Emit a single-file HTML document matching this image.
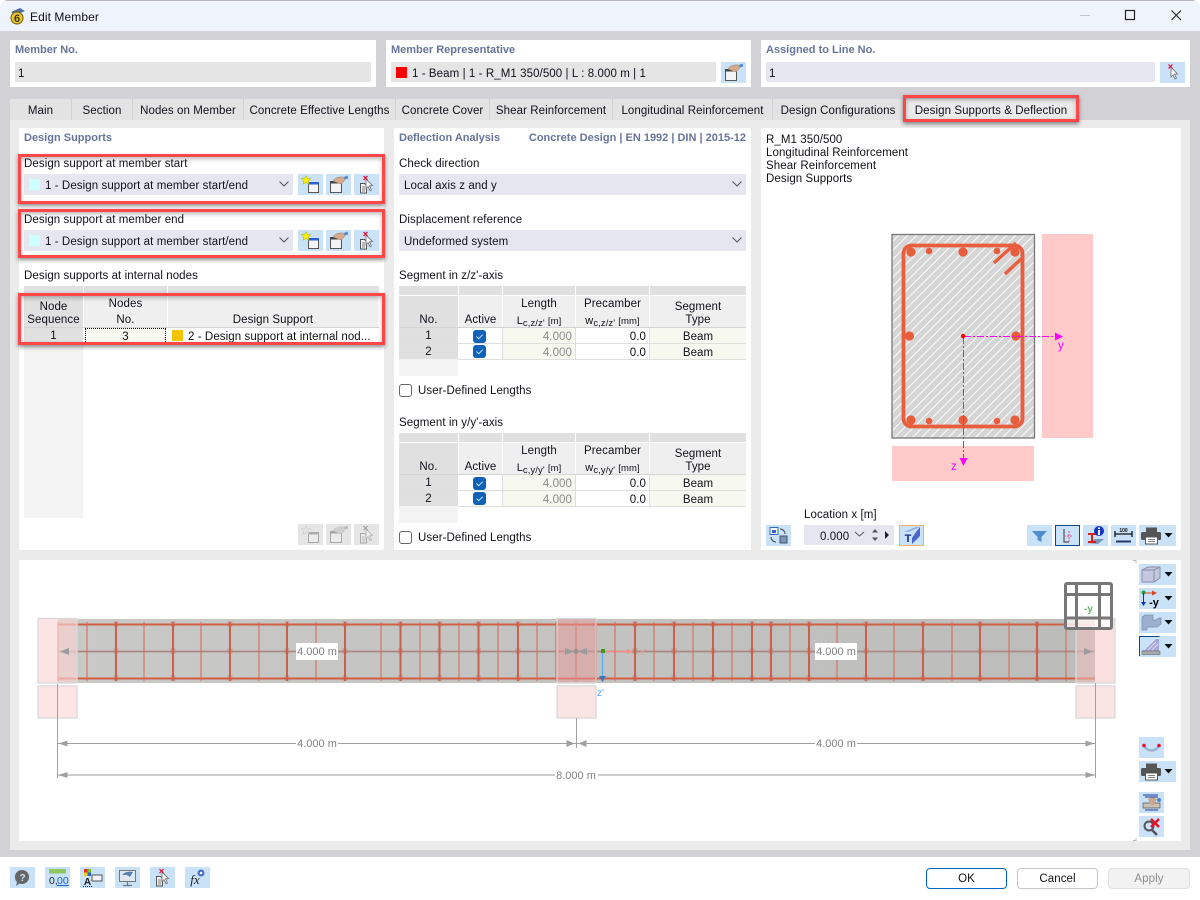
<!DOCTYPE html>
<html><head><meta charset="utf-8"><title>Edit Member</title>
<style>
html,body{margin:0;padding:0;background:#fff}
body{width:1200px;height:900px;overflow:hidden;position:relative;font-family:"Liberation Sans",sans-serif;font-size:11.5px;color:#10101a;letter-spacing:.08px}
svg{letter-spacing:0}
#w div,#w span.t{position:absolute}
.t{white-space:nowrap;line-height:14px;height:14px;transform:translateY(1px)}
.h{font-weight:700;color:#67749a;font-size:11px;letter-spacing:0}
.wh{background:#fff}
.dd{background:#e6e6f0}
.ro{background:#e5e5e5}
.b{background:#c9e2f8;width:25px;height:21px}
.b svg,.g svg{position:absolute;left:0;top:0}
.g{background:#e5e5e5;width:25px;height:21px}
.g svg{opacity:.42;filter:grayscale(1)}
.tab{top:99px;height:21px;background:#e3e3e3;line-height:24px;text-align:center;white-space:nowrap}
.red{border:3px solid #ff4649;box-sizing:border-box;box-shadow:0 2px 4px rgba(0,0,0,.45),inset 0 2px 4px rgba(0,0,0,.28)}
.c{text-align:center;white-space:nowrap;line-height:14px;transform:translateY(1px)}
.r{text-align:right;white-space:nowrap;line-height:15px;transform:translateY(1px)}
.cb{width:13px;height:13px;border:1px solid #666;border-radius:3px;box-sizing:border-box;background:#fff}
.ck{width:13px;height:13px;border-radius:3px;background:#0f62b8}
.ck svg{position:absolute;left:0;top:0}
.btn{top:868px;height:21px;width:81px;box-sizing:border-box;border:1px solid #c5c5c5;border-radius:4px;background:#fff;text-align:center;line-height:21px;font-size:11.5px}
sub{font-size:9.5px;vertical-align:-2px;line-height:0}
</style></head>
<body>
<svg width="0" height="0" style="position:absolute">
<defs>
<symbol id="new" viewBox="0 0 25 21"><rect x="10.5" y="8.5" width="10" height="10" fill="#f4f4f4" stroke="#555"/><rect x="10" y="8" width="11" height="2.5" fill="#2f5fd0"/><path d="M8 1.5l1.4 3 3.3.3-2.5 2.2.8 3.3L8 8.500l-3 1.800.8-3.300-2.500-2.200 3.300-.3z" fill="#f8f000" stroke="#b5a800" stroke-width=".5"/></symbol>
<symbol id="edit" viewBox="0 0 25 21"><rect x="4.500" y="7.500" width="11" height="11" fill="#f4f4f4" stroke="#555"/><rect x="4" y="7" width="12" height="2.500" fill="#444"/><path d="M7 7c1-3 6-4.500 10-4l2 1-1 3-3 3-3-1z" fill="#d4aa8c" stroke="#9a7e68" stroke-width=".5"/><path d="M18 3l3.500-1.500 .5 3-3 1z" fill="#4a86d8"/></symbol>
<symbol id="del" viewBox="0 0 25 21"><path d="M6.500 9.500h4l2 2v7.500h-6z" fill="#f4f4f4" stroke="#555"/><path d="M8 13h3M8 15h3M8 17h3" stroke="#555" stroke-width=".8"/><path d="M12 5l6.500 6.500-3 .4 2 4-1.500.7-2-4-2 2z" fill="#fff" stroke="#777" stroke-width=".9"/><path d="M9.500 2l4 4M13.500 2l-4 4" stroke="#e8002a" stroke-width="1.100"/></symbol>
<symbol id="cursor" viewBox="0 0 25 21"><path d="M11 5l6.500 7-3 .2 2 4-1.500.7-2-4-2 2z" fill="#fff" stroke="#777" stroke-width=".9"/><path d="M8.500 2.500l4 4M12.500 2.500l-4 4" stroke="#e8002a" stroke-width="1.100"/></symbol>
<symbol id="print" viewBox="0 0 25 21"><rect x="7" y="2.500" width="11" height="4.500" fill="#555"/><rect x="2" y="7" width="20" height="8" rx="1.500" fill="#555"/><rect x="6.500" y="12" width="12" height="7" fill="#fff" stroke="#555"/><path d="M9 14.500h7M9 16.500h7" stroke="#555" stroke-width=".8"/></symbol>
<symbol id="tri" viewBox="0 0 12 21"><path d="M1.500 8h8l-4 4.500z" fill="#111"/></symbol>
<pattern id="hatch" patternUnits="userSpaceOnUse" width="9" height="9"><rect width="9" height="9" fill="#d5d5d5"/><path d="M-1 10L10 -1M-1 1L1 -1M8 10L10 8" stroke="#fff" stroke-width=".9"/></pattern>
<linearGradient id="beamg" x1="0" x2="1" y1="0" y2="0"><stop offset="0" stop-color="#c9c9c7"/><stop offset="1" stop-color="#bcbcba"/></linearGradient>
<filter id="soft" x="-2%" y="-2%" width="104%" height="104%"><feGaussianBlur stdDeviation=".35"/></filter>
</defs>
</svg>

<div id="w" style="position:absolute;left:0;top:0;width:1200px;height:900px;border-radius:8px;overflow:hidden;background:#fff">
<!-- frame -->
<div style="left:0;top:0;width:1200px;height:31px;background:#eff3fb;border-top:1px solid #b5b5b8;box-sizing:border-box"></div>
<div style="left:0;top:31px;width:1200px;height:826px;background:#d1d1d6"></div>
<div style="left:10px;top:120px;width:1180px;height:730px;background:#ebebeb"></div>

<!-- title -->
<svg style="position:absolute;left:8px;top:6px" width="20" height="20" viewBox="0 0 20 20"><path d="M3 6l9-4 5 3-9 4z" fill="#4d6f9c"/><circle cx="9" cy="12" r="6" fill="#f0c61e" stroke="#6b5a10"/><text x="9" y="16" font-size="11" font-weight="700" text-anchor="middle" fill="#333" font-family="Liberation Sans">6</text></svg>
<span class="t" style="left:30px;top:9px;font-size:12px">Edit Member</span>
<svg style="position:absolute;left:1070px;top:0" width="130" height="31"><path d="M10 15.500h10" stroke="#c4c4c4"/><rect x="55.500" y="10.500" width="9" height="9" fill="none" stroke="#222" stroke-width="1.200"/><path d="M101.500 10.500l9.500 9.500M111 10.500l-9.500 9.500" stroke="#222" stroke-width="1.100"/></svg>

<!-- top groups -->
<div class="wh" style="left:10px;top:40px;width:366px;height:47px"></div>
<span class="t h" style="left:15px;top:42px">Member No.</span>
<div class="ro" style="left:15px;top:62px;width:356px;height:20px"></div>
<span class="t" style="left:18px;top:66px">1</span>

<div class="wh" style="left:386px;top:40px;width:365px;height:47px"></div>
<span class="t h" style="left:391px;top:42px">Member Representative</span>
<div class="ro" style="left:391px;top:62px;width:325px;height:20px"></div>
<div style="left:396px;top:67px;width:11px;height:11px;background:#f00"></div>
<span class="t" style="left:412px;top:66px">1 - Beam | 1 - R_M1 350/500 | L : 8.000 m | 1</span>
<div class="b" style="left:721px;top:62px"><svg width="25" height="21"><use href="#edit"/></svg></div>

<div class="wh" style="left:761px;top:40px;width:429px;height:47px"></div>
<span class="t h" style="left:766px;top:42px">Assigned to Line No.</span>
<div class="dd" style="left:766px;top:62px;width:389px;height:20px"></div>
<span class="t" style="left:769px;top:66px">1</span>
<div class="b" style="left:1160px;top:62px"><svg width="25" height="21"><use href="#cursor"/></svg></div>

<!-- tabs -->
<div class="tab" style="left:10px;width:61px">Main</div>
<div class="tab" style="left:72px;width:60px">Section</div>
<div class="tab" style="left:133px;width:110px">Nodes on Member</div>
<div class="tab" style="left:244px;width:151px">Concrete Effective Lengths</div>
<div class="tab" style="left:396px;width:93px">Concrete Cover</div>
<div class="tab" style="left:490px;width:122px">Shear Reinforcement</div>
<div class="tab" style="left:613px;width:159px">Longitudinal Reinforcement</div>
<div class="tab" style="left:773px;width:130px">Design Configurations</div>
<div class="tab" style="left:904px;width:174px;background:#ebebeb">Design Supports &amp; Deflection</div>

<!-- panels -->
<div class="wh" style="left:19px;top:128px;width:365px;height:422px"></div>
<div class="wh" style="left:394px;top:128px;width:357px;height:422px"></div>
<div class="wh" style="left:761px;top:128px;width:420px;height:422px"></div>
<div class="wh" style="left:19px;top:560px;width:1162px;height:281px"></div>

<!-- left panel -->
<span class="t h" style="left:24px;top:130px">Design Supports</span>
<span class="t" style="left:24px;top:156px">Design support at member start</span>
<div class="dd" style="left:24px;top:174px;width:269px;height:21px"></div>
<div style="left:29px;top:179px;width:11px;height:11px;background:#ccffff"></div>
<span class="t" style="left:45px;top:178px">1 - Design support at member start/end</span>
<svg style="position:absolute;left:278px;top:180px" width="12" height="8"><path d="M1.500 1.500l4.500 4.500 4.500-4.500" fill="none" stroke="#555"/></svg>
<div class="b" style="left:298px;top:174px"><svg width="25" height="21"><use href="#new"/></svg></div>
<div class="b" style="left:326px;top:174px"><svg width="25" height="21"><use href="#edit"/></svg></div>
<div class="b" style="left:354px;top:174px"><svg width="25" height="21"><use href="#del"/></svg></div>

<span class="t" style="left:24px;top:212px">Design support at member end</span>
<div class="dd" style="left:24px;top:230px;width:269px;height:21px"></div>
<div style="left:29px;top:235px;width:11px;height:11px;background:#ccffff"></div>
<span class="t" style="left:45px;top:234px">1 - Design support at member start/end</span>
<svg style="position:absolute;left:278px;top:236px" width="12" height="8"><path d="M1.500 1.500l4.500 4.500 4.500-4.500" fill="none" stroke="#555"/></svg>
<div class="b" style="left:298px;top:230px"><svg width="25" height="21"><use href="#new"/></svg></div>
<div class="b" style="left:326px;top:230px"><svg width="25" height="21"><use href="#edit"/></svg></div>
<div class="b" style="left:354px;top:230px"><svg width="25" height="21"><use href="#del"/></svg></div>

<span class="t" style="left:24px;top:268px">Design supports at internal nodes</span>
<!-- left table -->
<div style="left:24px;top:286px;width:59px;height:232px;background:#f3f3f3"></div>
<div style="left:24px;top:286px;width:355px;height:10px;background:#e0e0e0"></div>
<div style="left:24px;top:296px;width:59px;height:31px;background:#e0e0e0"></div>
<div style="left:84px;top:296px;width:83px;height:31px;background:#efefef"></div>
<div style="left:168px;top:296px;width:210px;height:31px;background:#efefef"></div>
<div style="left:83px;top:286px;width:1px;height:42px;background:#fff"></div>
<div style="left:167px;top:286px;width:1px;height:42px;background:#fff"></div>
<div style="left:24px;top:327px;width:355px;height:1px;background:#d4d4d4"></div>
<div class="c" style="left:24px;top:299px;width:59px">Node</div>
<div class="c" style="left:24px;top:312px;width:59px">Sequence</div>
<div class="c" style="left:84px;top:296px;width:83px">Nodes</div>
<div class="c" style="left:84px;top:312px;width:83px">No.</div>
<div class="c" style="left:168px;top:312px;width:210px">Design Support</div>
<div style="left:24px;top:328px;width:59px;height:16px;background:#e0e0e0"></div>
<div class="c" style="left:24px;top:328px;width:59px">1</div>
<div style="left:85px;top:328px;width:81px;height:16px;background:#f7f8f0;border:1px dotted #111;box-sizing:border-box"></div>
<div class="c" style="left:84px;top:329px;width:83px">3</div>
<div style="left:172px;top:330px;width:11px;height:11px;background:#f5c400"></div>
<span class="t" style="left:188px;top:329px">2 - Design support at internal nod...</span>
<div class="g" style="left:298px;top:524px"><svg width="25" height="21"><use href="#new"/></svg></div>
<div class="g" style="left:326px;top:524px"><svg width="25" height="21"><use href="#edit"/></svg></div>
<div class="g" style="left:354px;top:524px"><svg width="25" height="21"><use href="#del"/></svg></div>

<!-- middle panel -->
<span class="t h" style="left:399px;top:130px">Deflection Analysis</span>
<span class="t h" style="right:454px;top:130px">Concrete Design | EN 1992 | DIN | 2015-12</span>
<span class="t" style="left:399px;top:156px">Check direction</span>
<div class="dd" style="left:399px;top:174px;width:347px;height:21px"></div>
<span class="t" style="left:404px;top:178px">Local axis z and y</span>
<svg style="position:absolute;left:731px;top:180px" width="12" height="8"><path d="M1.500 1.500l4.500 4.500 4.500-4.500" fill="none" stroke="#555"/></svg>
<span class="t" style="left:399px;top:212px">Displacement reference</span>
<div class="dd" style="left:399px;top:230px;width:347px;height:21px"></div>
<span class="t" style="left:404px;top:234px">Undeformed system</span>
<svg style="position:absolute;left:731px;top:236px" width="12" height="8"><path d="M1.500 1.500l4.500 4.500 4.500-4.500" fill="none" stroke="#555"/></svg>

<span class="t" style="left:399px;top:268px">Segment in z/z'-axis</span>
<!-- table 1 -->
<div style="left:399px;top:359px;width:59px;height:17px;background:#f3f3f3"></div>
<div style="left:399px;top:286px;width:347px;height:9px;background:#e0e0e0"></div>
<div style="left:399px;top:296px;width:59px;height:31px;background:#e0e0e0"></div>
<div style="left:459px;top:296px;width:287px;height:31px;background:#efefef"></div>
<div style="left:458px;top:286px;width:1px;height:42px;background:#fff"></div>
<div style="left:502px;top:286px;width:1px;height:42px;background:#fff"></div>
<div style="left:575px;top:286px;width:1px;height:42px;background:#fff"></div>
<div style="left:649px;top:286px;width:1px;height:42px;background:#fff"></div>
<div style="left:399px;top:327px;width:347px;height:1px;background:#d4d4d4"></div>
<div class="c" style="left:399px;top:312px;width:59px">No.</div>
<div class="c" style="left:459px;top:312px;width:43px">Active</div>
<div class="c" style="left:503px;top:296px;width:72px">Length</div>
<div class="c" style="left:503px;top:313px;width:72px;font-size:11px">L<sub>c,z/z'</sub> <span style="font-size:9.500px">[m]</span></div>
<div class="c" style="left:576px;top:296px;width:73px">Precamber</div>
<div class="c" style="left:576px;top:313px;width:73px;font-size:11px">w<sub>c,z/z'</sub> <span style="font-size:9.500px">[mm]</span></div>
<div class="c" style="left:650px;top:299px;width:96px">Segment</div>
<div class="c" style="left:650px;top:312px;width:96px">Type</div>
<!-- rows -->
<div style="left:399px;top:328px;width:59px;height:15px;background:#e0e0e0"></div>
<div style="left:399px;top:344px;width:59px;height:15px;background:#e0e0e0"></div>
<div style="left:503px;top:328px;width:72px;height:31px;background:#f7f8f0"></div>
<div style="left:650px;top:328px;width:96px;height:31px;background:#f7f8f0"></div>
<div style="left:399px;top:343px;width:347px;height:1px;background:#dedede"></div>
<div style="left:458px;top:359px;width:288px;height:1px;background:#dedede"></div>
<div style="left:502px;top:328px;width:1px;height:31px;background:#dedede"></div>
<div style="left:575px;top:328px;width:1px;height:31px;background:#dedede"></div>
<div style="left:649px;top:328px;width:1px;height:31px;background:#dedede"></div>
<div class="c" style="left:399px;top:328px;width:59px">1</div>
<div class="c" style="left:399px;top:344px;width:59px">2</div>
<div class="ck" style="left:473px;top:330px"><svg width="13" height="13"><path d="M3.500 6.500l2.200 2.200 4-4" fill="none" stroke="#cfe2f7"/></svg></div>
<div class="ck" style="left:473px;top:345px"><svg width="13" height="13"><path d="M3.500 6.500l2.200 2.200 4-4" fill="none" stroke="#cfe2f7"/></svg></div>
<div class="r" style="left:503px;top:329px;width:69px;color:#888">4.000</div>
<div class="r" style="left:503px;top:345px;width:69px;color:#888">4.000</div>
<div class="r" style="left:576px;top:329px;width:70px">0.0</div>
<div class="r" style="left:576px;top:345px;width:70px">0.0</div>
<div class="c" style="left:650px;top:329px;width:96px">Beam</div>
<div class="c" style="left:650px;top:345px;width:96px">Beam</div>
<div class="cb" style="left:399px;top:384px"></div>
<span class="t" style="left:418px;top:383px">User-Defined Lengths</span>

<span class="t" style="left:399px;top:415px">Segment in y/y'-axis</span>
<!-- table 2 -->
<div style="left:399px;top:506px;width:59px;height:17px;background:#f3f3f3"></div>
<div style="left:399px;top:433px;width:347px;height:9px;background:#e0e0e0"></div>
<div style="left:399px;top:443px;width:59px;height:31px;background:#e0e0e0"></div>
<div style="left:459px;top:443px;width:287px;height:31px;background:#efefef"></div>
<div style="left:458px;top:433px;width:1px;height:42px;background:#fff"></div>
<div style="left:502px;top:433px;width:1px;height:42px;background:#fff"></div>
<div style="left:575px;top:433px;width:1px;height:42px;background:#fff"></div>
<div style="left:649px;top:433px;width:1px;height:42px;background:#fff"></div>
<div style="left:399px;top:474px;width:347px;height:1px;background:#d4d4d4"></div>
<div class="c" style="left:399px;top:459px;width:59px">No.</div>
<div class="c" style="left:459px;top:459px;width:43px">Active</div>
<div class="c" style="left:503px;top:443px;width:72px">Length</div>
<div class="c" style="left:503px;top:460px;width:72px;font-size:11px">L<sub>c,y/y'</sub> <span style="font-size:9.500px">[m]</span></div>
<div class="c" style="left:576px;top:443px;width:73px">Precamber</div>
<div class="c" style="left:576px;top:460px;width:73px;font-size:11px">w<sub>c,y/y'</sub> <span style="font-size:9.500px">[mm]</span></div>
<div class="c" style="left:650px;top:446px;width:96px">Segment</div>
<div class="c" style="left:650px;top:459px;width:96px">Type</div>
<div style="left:399px;top:475px;width:59px;height:15px;background:#e0e0e0"></div>
<div style="left:399px;top:491px;width:59px;height:15px;background:#e0e0e0"></div>
<div style="left:503px;top:475px;width:72px;height:31px;background:#f7f8f0"></div>
<div style="left:650px;top:475px;width:96px;height:31px;background:#f7f8f0"></div>
<div style="left:399px;top:490px;width:347px;height:1px;background:#dedede"></div>
<div style="left:458px;top:506px;width:288px;height:1px;background:#dedede"></div>
<div style="left:502px;top:475px;width:1px;height:31px;background:#dedede"></div>
<div style="left:575px;top:475px;width:1px;height:31px;background:#dedede"></div>
<div style="left:649px;top:475px;width:1px;height:31px;background:#dedede"></div>
<div class="c" style="left:399px;top:475px;width:59px">1</div>
<div class="c" style="left:399px;top:491px;width:59px">2</div>
<div class="ck" style="left:473px;top:477px"><svg width="13" height="13"><path d="M3.500 6.500l2.200 2.200 4-4" fill="none" stroke="#cfe2f7"/></svg></div>
<div class="ck" style="left:473px;top:492px"><svg width="13" height="13"><path d="M3.500 6.500l2.200 2.200 4-4" fill="none" stroke="#cfe2f7"/></svg></div>
<div class="r" style="left:503px;top:476px;width:69px;color:#888">4.000</div>
<div class="r" style="left:503px;top:492px;width:69px;color:#888">4.000</div>
<div class="r" style="left:576px;top:476px;width:70px">0.0</div>
<div class="r" style="left:576px;top:492px;width:70px">0.0</div>
<div class="c" style="left:650px;top:476px;width:96px">Beam</div>
<div class="c" style="left:650px;top:492px;width:96px">Beam</div>
<div class="cb" style="left:399px;top:531px"></div>
<span class="t" style="left:418px;top:530px">User-Defined Lengths</span>

<!-- right panel text -->
<span class="t" style="left:766px;top:132px">R_M1 350/500</span>
<span class="t" style="left:766px;top:145px">Longitudinal Reinforcement</span>
<span class="t" style="left:766px;top:158px">Shear Reinforcement</span>
<span class="t" style="left:766px;top:171px">Design Supports</span>

<span class="t" style="left:804px;top:507px">Location x [m]</span>
<div style="left:766px;top:525px" class="b"><svg width="25" height="21" viewBox="0 0 25 21"><rect x="4" y="2.500" width="8" height="7" fill="#fff" stroke="#2f66c8"/><rect x="6" y="5" width="4" height="3" fill="#2f66c8"/><rect x="14" y="11" width="7" height="7" fill="#7c94b5" stroke="#44566e"/><path d="M14 4a5 5 0 0 1 5 5M10 17a5 5 0 0 1-5-5" fill="none" stroke="#444"/></svg></div>
<div class="dd" style="left:804px;top:525px;width:90px;height:20px"></div>
<span class="t" style="left:820px;top:529px">0.000</span>
<svg style="position:absolute;left:852px;top:525px" width="42" height="20"><path d="M3 7l4.500 4 4.500-4" fill="none" stroke="#555"/><path d="M20 7.500l3-3.500 3 3.500zM20 12.500l3 3.500 3-3.500z" fill="#555"/><path d="M33 6v8l4-4z" fill="#222"/></svg>
<div class="b" style="left:899px;top:525px;box-shadow:inset 0 0 0 1px #f0b070"><svg width="25" height="21" viewBox="0 0 25 21"><path d="M5 7l12-5h4L9 7z" fill="#8ea8e0"/><path d="M17 7l4-5v9l-8 8v-6z" fill="#4a66c8"/><text x="9" y="17" font-size="11" font-weight="700" fill="#102a80" text-anchor="middle" font-family="Liberation Sans">T</text></svg></div>
<div class="b" style="left:1027px;top:525px"><svg width="25" height="21" viewBox="0 0 25 21"><path d="M5 6h15l-5.500 6v5l-4-2v-3z" fill="#4f8fd0"/></svg></div>
<div class="b" style="left:1055px;top:525px;box-sizing:border-box;border:1px solid #0c4a86;width:25px"><svg style="left:-1px;top:-1px" width="25" height="21" viewBox="0 0 25 21"><path d="M9 4v13h5" fill="none" stroke="#555" stroke-width="1.200"/><path d="M9 11h9M14 6v12" stroke="#e64a90" stroke-dasharray="2 1"/></svg></div>
<div class="b" style="left:1083px;top:525px"><svg width="25" height="21" viewBox="0 0 25 21"><path d="M4 18l8-4h9l-6 5z" fill="#7a94b8"/><path d="M5 8h8v2h-3v6h3v2H5v-2h3v-6H5z" fill="#d8201c"/><circle cx="16" cy="6" r="5" fill="#1034c8"/><rect x="15" y="5" width="2" height="5" fill="#fff"/><rect x="15" y="2.500" width="2" height="1.500" fill="#fff"/></svg></div>
<div class="b" style="left:1111px;top:525px"><svg width="25" height="21" viewBox="0 0 25 21"><path d="M4 9h17M4 6v6M21 6v6M5 16.500h15" stroke="#111" stroke-width="1.300" fill="none"/><path d="M5 16.500h15" stroke="#223a6a" stroke-width="2"/><text x="12.500" y="7" font-size="5" font-weight="700" text-anchor="middle" fill="#111" font-family="Liberation Sans">100</text></svg></div>
<div class="b" style="left:1139px;top:525px;width:37px"><svg width="25" height="21"><use href="#print"/></svg><svg style="left:24px" width="12" height="21"><use href="#tri"/></svg></div>

<!-- Section drawing & beam -->
<svg style="position:absolute;left:0;top:0" width="1200" height="900" viewBox="0 0 1200 900" font-family="Liberation Sans">
 <rect x="1042" y="234" width="51" height="204" fill="#ffcaca"/>
 <rect x="892" y="446" width="142" height="35" fill="#ffcaca"/>
 <rect x="892" y="234.500" width="142.500" height="203.500" fill="url(#hatch)" stroke="#777" stroke-width="1.300"/>
 <rect x="903.500" y="245.500" width="119" height="181" rx="8" fill="none" stroke="#e85d3c" stroke-width="3.800"/>
 <path d="M994 263l22-20M1005 274l17-16" stroke="#e85d3c" stroke-width="3.400" fill="none"/>
 <g fill="#e85d3c"><circle cx="911" cy="252" r="4.600"/><circle cx="963" cy="252" r="4.600"/><circle cx="1015" cy="252" r="4.600"/><circle cx="911" cy="420" r="4.600"/><circle cx="963" cy="420" r="4.600"/><circle cx="1015" cy="420" r="4.600"/><circle cx="909.500" cy="336" r="4.600"/><circle cx="1016" cy="336" r="4.600"/><circle cx="929" cy="251" r="3.300"/><circle cx="997" cy="251" r="3.300"/><circle cx="929" cy="421" r="3.300"/><circle cx="997" cy="421" r="3.300"/></g>
 <path d="M964 336.500H1056M963.500 337V460" stroke="#ff00ff" stroke-width="1" stroke-dasharray="7 2 2 2" fill="none"/>
 <path d="M1055 332.500l8 4-8 4zM959.500 458l4 8 4-8z" fill="#ff00ff"/>
 <circle cx="963" cy="336" r="2.200" fill="#f00"/>
 <text x="1058" y="349" font-size="11.500" fill="#ff00ff">y</text>
 <text x="951" y="470" font-size="11.500" fill="#ff00ff">z</text>

 <g filter="url(#soft)">
  <rect x="58" y="619" width="1037" height="64" fill="url(#beamg)"/>
  <g fill="none">
   <path d="M58 624.500H1095M58 678.500H1095" stroke="#d05f45" stroke-width="2"/>
   <path d="M58 651.500H1095" stroke="#a98a86" stroke-width="1.800"/>
   <path d="M58 622V681M87 622V681M144 622V681M201 622V681M259 622V681M316 622V681M381 622V681M420 622V681M459 622V681M498 622V681M537 622V681M576 622V681M615 622V681M654 622V681M693 622V681M732 622V681M790 622V681M837 622V681M894 622V681M952 622V681M1009 622V681M1066 622V681" stroke="#d8664e" stroke-width="1"/>
   <path d="M116 622V681M173 622V681M230 622V681M287 622V681M345 622V681M400.500 622V681M439.500 622V681M478.500 622V681M518 622V681M556.500 622V681M596 622V681M635 622V681M674 622V681M713 622V681M752 622V681M771 622V681M809 622V681M866 622V681M923 622V681M980 622V681M1037 622V681" stroke="#c9624d" stroke-width="2"/>
   <path d="M116 621V681M173 621V681M230 621V681M287 621V681M345 621V681M400.500 621V681M439.500 621V681M478.500 621V681M518 621V681M635 621V681M674 621V681M713 621V681M752 621V681M771 621V681M809 621V681M866 621V681M923 621V681M980 621V681M1037 621V681" stroke="#c9624d" stroke-opacity=".28" stroke-width="5" stroke-dasharray="6 21"/>
  </g>
  <!-- supports -->
  <g stroke="#d9d9d9" stroke-width="1.300">
   <rect x="38" y="618.500" width="39" height="64.500" fill="#fbd4d4" fill-opacity=".65"/>
   <rect x="38" y="686" width="39" height="32" fill="#fbd4d4" fill-opacity=".6"/>
   <rect x="557" y="618.500" width="39" height="64.500" fill="#e89a9a" fill-opacity=".5"/>
   <rect x="557" y="686" width="39" height="32" fill="#f8d8d8" fill-opacity=".7"/>
   <rect x="1076" y="618.500" width="39" height="64.500" fill="#f5bfbf" fill-opacity=".5"/>
   <rect x="1076" y="686" width="39" height="32" fill="#f8d8d8" fill-opacity=".7"/>
  </g>
  <!-- centre dim line in beam -->
  <path d="M60 651.500l9-3.500v7zM574 651.500l-9-3.500v7zM578 651.500l9-3.500v7zM1093 651.500l-9-3.500v7z" fill="#9b9b9f"/>
  <circle cx="576" cy="651.500" r="2.500" fill="#9b8f92"/>
  <!-- dims -->
  <path d="M57.500 684V778M576.500 718V748M1095.500 683V778" stroke="#a0a0a2" stroke-width="1" fill="none"/>
  <path d="M58 743.500H1095" stroke="#a0a0a2"/>
  <path d="M58 775H1095" stroke="#bcbcbc" stroke-width="1.500"/>
  <path d="M58.500 743.500l9-3v6zM574.500 743.500l-8-3.500v7zM578.500 743.500l8-3.500v7zM1094.500 743.500l-9-3v6zM58.500 775l9-3v6zM1094.500 775l-9-3v6z" fill="#a0a0a2"/>
 </g>
 <rect x="296" y="643" width="42" height="17" fill="#fff"/>
 <rect x="815" y="643" width="42" height="17" fill="#fff"/>
 <rect x="296" y="736" width="42" height="15" fill="#fff"/>
 <rect x="815" y="736" width="42" height="15" fill="#fff"/>
 <rect x="555" y="768" width="43" height="15" fill="#fff"/>
 <g font-size="11" fill="#808084" text-anchor="middle">
  <text x="317" y="655">4.000 m</text><text x="836" y="655">4.000 m</text>
  <text x="317" y="747">4.000 m</text><text x="836" y="747">4.000 m</text>
  <text x="576" y="779">8.000 m</text>
 </g>
 <!-- local axes -->
 <path d="M603 651.500H631" stroke="#ff8a8a" stroke-width="1.500"/>
 <path d="M627 649l6 2.500-6 2.500z" fill="#ff8a8a"/>
 <path d="M602.500 652V677" stroke="#57b4f5" stroke-width="1.500"/>
 <path d="M599 676h7l-3.500 6z" fill="#3f74c0"/>
 <rect x="601" y="649" width="4" height="4" fill="#3f9a1e"/>
 <text x="640" y="655" font-size="10" fill="#f09a9a">x'</text>
 <text x="597" y="696" font-size="10" fill="#4fa5ef">z'</text>
 <!-- view cube -->
 <g fill="#fff" fill-opacity=".75" stroke="#777" stroke-width="3" stroke-linejoin="round">
  <rect x="1065.500" y="583.500" width="46" height="45" rx="1.500"/>
  <path d="M1076.500 583.500V628.500M1099.500 583.500V628.500M1065.500 594.500H1111.500M1065.500 618H1111.500" fill="none"/>
 </g>
 <text x="1088.500" y="612" font-size="10" font-weight="700" fill="#66b266" text-anchor="middle">-y</text>
 <path d="M1133 560.500h3M1136 560v3M1133 840.500h3M1136 841v-3" stroke="#bbb"/>
</svg>

<!-- view buttons -->
<div class="b" style="left:1139px;top:564px;width:37px"><svg width="25" height="21" viewBox="0 0 25 21"><path d="M3 6l6-3h12v11l-6 4H3z" fill="#c4c8df" stroke="#8a8ea6"/><path d="M3 6h12v12M15 6l6-3" fill="none" stroke="#8a8ea6"/></svg><svg style="left:24px" width="12" height="21"><use href="#tri"/></svg></div>
<div class="b" style="left:1139px;top:588px;width:37px"><svg width="25" height="21" viewBox="0 0 25 21"><circle cx="4.500" cy="4.500" r="2" fill="#0fa84a"/><path d="M4.500 5H15" stroke="#d8481e"/><path d="M13 2.500l5 2.500-5 2.500z" fill="#d8481e"/><path d="M4.500 5V16" stroke="#1034b8"/><path d="M2 14l2.500 4 2.500-4z" fill="#1034b8"/><text x="15" y="18" font-size="11" font-weight="700" text-anchor="middle" font-family="Liberation Sans">-y</text></svg><svg style="left:24px" width="12" height="21"><use href="#tri"/></svg></div>
<div class="b" style="left:1139px;top:612px;width:37px"><svg width="25" height="21" viewBox="0 0 25 21"><path d="M3 5l3-2h8v5h3l3-2h2v6l-4 3H8v3H3z" fill="#9ab0ce" stroke="#7d8fa8" stroke-width=".7"/></svg><svg style="left:24px" width="12" height="21"><use href="#tri"/></svg></div>
<div class="b" style="left:1139px;top:636px;width:37px"><svg width="25" height="21" viewBox="0 0 25 21"><path d="M.5 20V.5h20" fill="none" stroke="#0c4a86"/><path d="M3 15l14-12h3v12z" fill="#a7a8e0"/><path d="M5 14l10-10M9 14l8-8M13 14l6-6" stroke="#eee" stroke-width=".8"/><rect x="3" y="15" width="18" height="3.500" fill="#aaa" stroke="#555" stroke-width=".5"/></svg><svg style="left:24px" width="12" height="21"><use href="#tri"/></svg></div>
<div class="b" style="left:1139px;top:737px"><svg width="25" height="21" viewBox="0 0 25 21"><path d="M5 9c4 6 11 6 15 0" fill="none" stroke="#9cb4d0" stroke-width="2.500"/><circle cx="5" cy="8.500" r="1.800" fill="#e8102a"/><circle cx="20" cy="8.500" r="1.800" fill="#e8102a"/></svg></div>
<div class="b" style="left:1139px;top:761px;width:37px"><svg width="25" height="21"><use href="#print"/></svg><svg style="left:24px" width="12" height="21"><use href="#tri"/></svg></div>
<div class="b" style="left:1139px;top:792px"><svg width="25" height="21" viewBox="0 0 25 21"><path d="M4 3h15M6 5h13M6 18h13" stroke="#1c3a90"/><path d="M4 11h17v5H4z" fill="#c9c2b2" stroke="#555" stroke-width=".7"/><path d="M9 7c3-2 6-2 9 0l-3 6h-3z" fill="#c9a78c"/><circle cx="20" cy="8" r="2" fill="#4a86d8"/></svg></div>
<div class="b" style="left:1139px;top:816px"><svg width="25" height="21" viewBox="0 0 25 21"><circle cx="10" cy="10" r="4.500" fill="none" stroke="#555" stroke-width="2"/><path d="M13 14l5 5" stroke="#555" stroke-width="2.500"/><path d="M12 3l8 8M20 3l-8 8" stroke="#e8102a" stroke-width="2.500"/></svg></div>

<!-- bottom bar -->
<div class="b" style="left:10px;top:867px"><svg width="25" height="21" viewBox="0 0 25 21"><path d="M12.500 3a7 7 0 1 1-3 13.500L6 19l1-4a7 7 0 0 1 5.500-12z" fill="#666"/><text x="12.500" y="14" font-size="10" font-weight="700" fill="#c9e2f8" text-anchor="middle" font-family="Liberation Sans">?</text></svg></div>
<div class="b" style="left:45px;top:867px"><svg width="25" height="21" viewBox="0 0 25 21"><rect x="4" y="2" width="17" height="4.500" fill="#8fc65f"/><text x="4" y="17" font-size="10.500" font-family="Liberation Sans" fill="#222">0,</text><text x="12" y="17" font-size="10.500" font-family="Liberation Sans" fill="#1c5fc8" text-decoration="underline">00</text></svg></div>
<div class="b" style="left:80px;top:867px"><svg width="25" height="21" viewBox="0 0 25 21"><rect x="4" y="2" width="3.500" height="3.500" fill="#e83020"/><rect x="7.500" y="2" width="3.500" height="3.500" fill="#6cc030"/><rect x="4" y="5.500" width="3.500" height="3.500" fill="#f0d020"/><rect x="7.500" y="5.500" width="3.500" height="3.500" fill="#3060d0"/><rect x="12" y="8" width="10" height="6" fill="#f4f4f4" stroke="#555"/><text x="7.500" y="18" font-size="10" font-weight="700" text-anchor="middle" font-family="Liberation Sans" fill="#222">A</text><path d="M3 19.500h9" stroke="#222" stroke-dasharray="1 1"/></svg></div>
<div class="b" style="left:115px;top:867px"><svg width="25" height="21" viewBox="0 0 25 21"><rect x="4.500" y="3.500" width="16" height="11" fill="#dfe8f0" stroke="#777"/><path d="M7 8c3-3 7-4 11-3l-3 5-3-2z" fill="#5a80b0"/><path d="M12.500 15v3M8 18.500h9" stroke="#777" stroke-width="1.200"/></svg></div>
<div class="b" style="left:150px;top:867px"><svg width="25" height="21"><use href="#del"/></svg></div>
<div class="b" style="left:185px;top:867px"><svg width="25" height="21" viewBox="0 0 25 21"><text x="10" y="17" font-size="13" font-style="italic" font-family="Liberation Serif" text-anchor="middle" fill="#222">fx</text><circle cx="16" cy="6" r="3.500" fill="#4a6fc0"/><circle cx="16" cy="6" r="1.300" fill="#fff"/></svg></div>

<div class="btn" style="left:926px;border-color:#0067c0">OK</div>
<div class="btn" style="left:1017px">Cancel</div>
<div class="btn" style="left:1108px;width:82px;background:#f2f2f2;border-color:#e0e0e0;color:#8d8d8d">Apply</div>

<!-- highlight frames -->
<div class="red" style="left:18px;top:154px;width:367px;height:50px"></div>
<div class="red" style="left:18px;top:209px;width:367px;height:49px"></div>
<div class="red" style="left:18px;top:293px;width:367px;height:52px"></div>
<div class="red" style="left:903px;top:95px;width:176px;height:27px"></div>
</div>
</body></html>
